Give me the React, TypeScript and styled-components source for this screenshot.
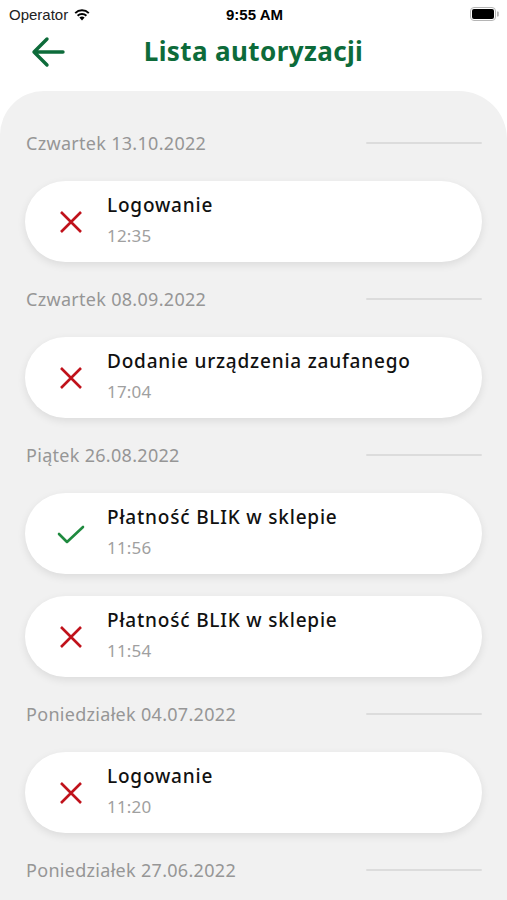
import styled, { createGlobalStyle } from "styled-components";

const GlobalStyle = createGlobalStyle`
  html, body {
    margin: 0;
    padding: 0;
    background: #ffffff;
  }
  body {
    font-family: "Noto Sans", "DejaVu Sans", sans-serif;
  }
`;

type Status = "ok" | "fail";

type Entry = {
  title: string;
  time: string;
  status: Status;
};

type Day = {
  label: string;
  entries: Entry[];
};

const days: Day[] = [
  {
    label: "Czwartek 13.10.2022",
    entries: [{ title: "Logowanie", time: "12:35", status: "fail" }],
  },
  {
    label: "Czwartek 08.09.2022",
    entries: [{ title: "Dodanie urządzenia zaufanego", time: "17:04", status: "fail" }],
  },
  {
    label: "Piątek 26.08.2022",
    entries: [
      { title: "Płatność BLIK w sklepie", time: "11:56", status: "ok" },
      { title: "Płatność BLIK w sklepie", time: "11:54", status: "fail" },
    ],
  },
  {
    label: "Poniedziałek 04.07.2022",
    entries: [{ title: "Logowanie", time: "11:20", status: "fail" }],
  },
  {
    label: "Poniedziałek 27.06.2022",
    entries: [],
  },
];

const WifiIcon = () => (
  <svg width="18" height="13" viewBox="0 0 18 13">
    <path d="M9 12.5 L6.4 9.6 A3.8 3.8 0 0 1 11.6 9.6 Z" fill="#000" />
    <path d="M4.6 7.8 A6.4 6.4 0 0 1 13.4 7.8" stroke="#000" strokeWidth="2" fill="none" />
    <path d="M2.2 5.1 A9.8 9.8 0 0 1 15.8 5.1" stroke="#000" strokeWidth="2" fill="none" />
  </svg>
);

const Battery = () => (
  <svg width="30" height="14" viewBox="0 0 30 14">
    <rect x="0.5" y="0.5" width="25" height="13" rx="3.5" fill="none" stroke="#b5b5b5" />
    <rect x="2" y="2" width="22" height="10" rx="2" fill="#000" />
    <path d="M27 4.5 h0.8 a1 1 0 0 1 1 1 v3 a1 1 0 0 1 -1 1 H27 Z" fill="#b5b5b5" />
  </svg>
);

const BackArrow = () => (
  <svg width="34" height="32" viewBox="0 0 34 32">
    <path
      d="M32 16 H3 M16 3 L3 16 L16 29"
      stroke="#0d6b3a"
      strokeWidth="3.4"
      fill="none"
      strokeLinecap="round"
      strokeLinejoin="round"
    />
  </svg>
);

const CrossIcon = () => (
  <svg width="24" height="24" viewBox="0 0 24 24">
    <path d="M2 2 L22 22 M22 2 L2 22" stroke="#c0121b" strokeWidth="2.6" fill="none" />
  </svg>
);

const CheckIcon = () => (
  <svg width="28" height="20" viewBox="0 0 28 20">
    <path
      d="M2 10 L10 18 L26 3"
      stroke="#1f8a3f"
      strokeWidth="2.6"
      fill="none"
      strokeLinecap="round"
      strokeLinejoin="round"
    />
  </svg>
);

const App = () => {
  return (
    <Screen>
      <GlobalStyle />
      <StatusBar>
        <Carrier>
          Operator <WifiIcon />
        </Carrier>
        <Clock>9:55 AM</Clock>
        <BatteryWrap>
          <Battery />
        </BatteryWrap>
      </StatusBar>
      <Header>
        <BackButton aria-label="Wstecz">
          <BackArrow />
        </BackButton>
        <Title>Lista autoryzacji</Title>
      </Header>
      <Panel>
        {days.map((day) => (
          <DayGroup key={day.label}>
            <DayHeader>
              <DayLabel>{day.label}</DayLabel>
              <DayLine />
            </DayHeader>
            {day.entries.map((entry, i) => (
              <Card key={i}>
                <IconSlot>{entry.status === "ok" ? <CheckIcon /> : <CrossIcon />}</IconSlot>
                <CardText>
                  <CardTitle>{entry.title}</CardTitle>
                  <CardTime>{entry.time}</CardTime>
                </CardText>
              </Card>
            ))}
          </DayGroup>
        ))}
      </Panel>
    </Screen>
  );
};

export default App;

const Screen = styled.div`
  width: 507px;
  height: 900px;
  overflow: hidden;
  background: #ffffff;
  display: flex;
  flex-direction: column;
`;

const StatusBar = styled.div`
  height: 28px;
  display: grid;
  grid-template-columns: 1fr auto 1fr;
  align-items: center;
  padding: 0 7px 0 9px;
  font-family: "Liberation Sans", Arial, sans-serif;
  font-size: 15px;
  color: #000;
`;

const Carrier = styled.div`
  display: flex;
  align-items: center;
  gap: 5px;
  color: #222;
`;

const Clock = styled.div`
  font-weight: 700;
  font-size: 15px;
`;

const BatteryWrap = styled.div`
  display: flex;
  justify-content: flex-end;
`;

const Header = styled.div`
  position: relative;
  height: 63px;
  display: flex;
  justify-content: center;
  align-items: flex-start;
`;

const BackButton = styled.button`
  position: absolute;
  left: 31px;
  top: 8px;
  padding: 0;
  border: 0;
  background: none;
  display: flex;
`;

const Title = styled.h1`
  margin: 5px 0 0;
  font-size: 26px;
  line-height: 36px;
  font-weight: 700;
  color: #0d6b3a;
  letter-spacing: 0.4px;
`;

const Panel = styled.div`
  flex: 1;
  background: #f1f1f1;
  border-radius: 44px 48px 0 0;
  padding: 38px 25px 0 25px;
  display: flex;
  flex-direction: column;
  gap: 23px;
`;

const DayGroup = styled.div`
  display: flex;
  flex-direction: column;
  gap: 22px;
`;

const DayHeader = styled.div`
  display: flex;
  align-items: center;
  justify-content: space-between;
  height: 28px;
  margin-bottom: 2px;
`;

const DayLabel = styled.span`
  font-size: 18px;
  letter-spacing: 0.3px;
  color: #969696;
  padding-left: 1px;
`;

const DayLine = styled.div`
  width: 116px;
  height: 2px;
  background: #dcdcdc;
  border-radius: 1px;
`;

const Card = styled.div`
  height: 81px;
  border-radius: 41px;
  background: #ffffff;
  box-shadow: 0 3px 8px rgba(0, 0, 0, 0.09);
  display: flex;
  align-items: center;
`;

const IconSlot = styled.div`
  width: 82px;
  display: flex;
  justify-content: center;
  padding-left: 9px;
  box-sizing: border-box;
`;

const CardText = styled.div`
  display: flex;
  flex-direction: column;
  gap: 5px;
  padding-bottom: 2px;
`;

const CardTitle = styled.span`
  font-size: 19px;
  line-height: 25px;
  letter-spacing: 0.8px;
  font-weight: 500;
  color: #111;
`;

const CardTime = styled.span`
  font-size: 17px;
  line-height: 25px;
  letter-spacing: 0.2px;
  color: #a0a0a0;
`;
